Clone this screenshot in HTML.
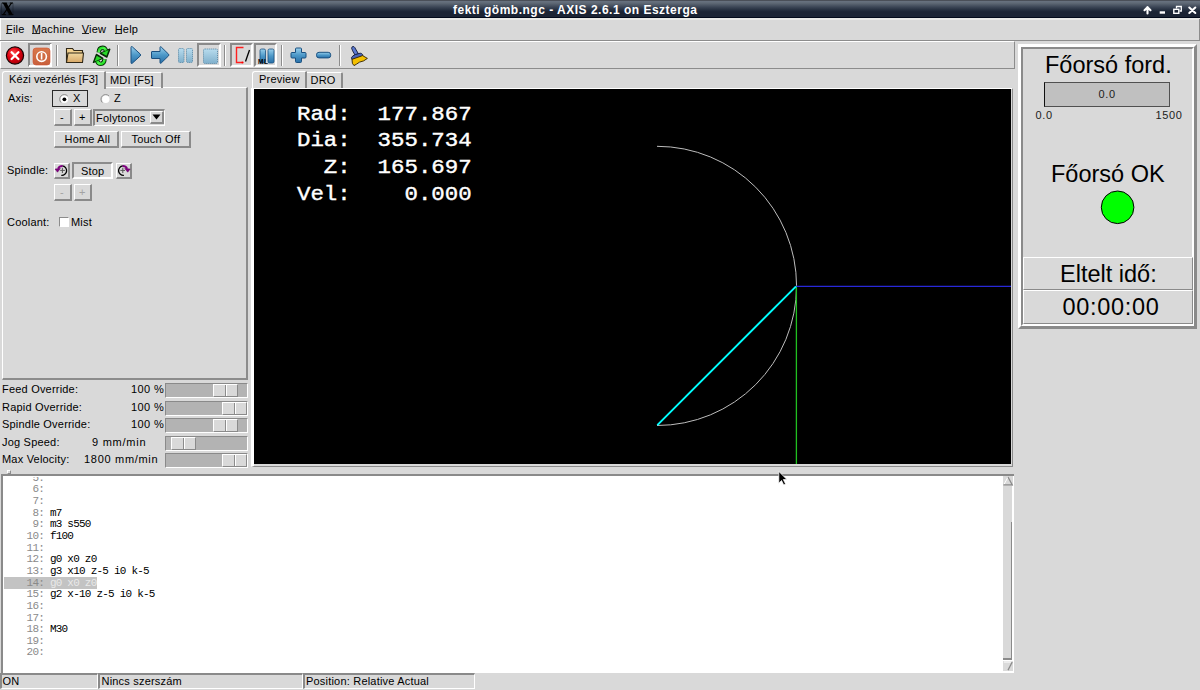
<!DOCTYPE html>
<html><head><meta charset="utf-8">
<style>
*{margin:0;padding:0;box-sizing:border-box}
html,body{width:1200px;height:690px;overflow:hidden;background:#d9d9d9;font-family:"Liberation Sans",sans-serif;font-size:11px;color:#000;position:relative;letter-spacing:0.2px}
.mono{letter-spacing:0}
.a{position:absolute}
.t{position:absolute;line-height:1;white-space:pre}
.u{text-decoration:underline;text-underline-offset:0px}
.rz{position:absolute;border-style:solid;border-width:1px 2px 2px 1px;border-color:#fff #8a8a8a #8a8a8a #fff;background:#d9d9d9}
.sk{position:absolute;border-style:solid;border-width:2px 1px 1px 2px;border-color:#8a8a8a #fff #fff #8a8a8a}
.sep{position:absolute;top:45px;width:2px;height:21px;border-left:1px solid #8c8c8c;border-right:1px solid #fff}
.mono{font-family:"Liberation Mono",monospace}
svg{position:absolute;overflow:visible}
</style></head><body>
<!-- title bar -->
<div class="a" style="left:0;top:0;width:1200px;height:18px;background:linear-gradient(#4a4f58 0px,#4a4f58 1px,#687280 1px,#606a76 3px,#3c4656 7px,#1e2838 11px,#1b2434 12px,#1b2434 17px,#020a1a 17px,#020a1a 18px)"></div>
<svg style="left:0;top:0" width="16" height="18" viewBox="0 0 16 18">
 <path d="M1.5 3 H13 V15 H1.5 Z" fill="none" stroke="#0a1018" stroke-width="0.8" opacity="0.45"/>
 <path d="M2.8 3 L6.6 3 L12.8 14.6 L9 14.6 Z" fill="#000"/>
 <path d="M12.2 3 L10.8 3 L2.6 14.6 L4 14.6 Z" fill="#000"/>
 <path d="M1.8 14.6 H6 M8.5 14.6 H13.4 M2 3 H6.8 M9.8 3 H13" stroke="#000" stroke-width="0.9"/>
</svg>
<div class="t" style="left:453px;top:3.6px;font-size:12px;letter-spacing:0.5px;font-weight:bold;color:#fff">fekti gömb.ngc - AXIS 2.6.1 on Eszterga</div>
<svg style="left:1140px;top:0" width="60" height="18" viewBox="1140 0 60 18">
 <path d="M1147.5 7.2 L1144.5 10.2 M1147.5 7.2 L1150.5 10.2 M1147.5 7 V13.5" stroke="#fff" stroke-width="2.1" fill="none" stroke-linecap="round"/>
 <rect x="1159.7" y="11.3" width="5.3" height="2.4" fill="#fff"/>
 <rect x="1173.8" y="9.3" width="5" height="4" stroke="#fff" stroke-width="1.4" fill="none"/>
 <path d="M1176.5 8.5 V6.5 H1181.3 V11 H1179.5" stroke="#fff" stroke-width="1.3" fill="none"/>
 <path d="M1189.3 7.5 L1195.3 13 M1195.3 7.5 L1189.3 13" stroke="#fff" stroke-width="2.1" fill="none" stroke-linecap="round"/>
</svg>
<!-- menubar -->
<div class="a" style="left:0;top:18px;width:1200px;height:2px;background:#e8e9e6"></div>
<div class="a" style="left:0;top:18px;width:1px;height:24px;background:#fff"></div>
<div class="a" style="left:0;top:40px;width:1200px;height:1px;background:#8c8c8c"></div>
<div class="a" style="left:1199px;top:19px;width:1px;height:22px;background:#8c8c8c"></div>
<div class="t" style="left:6px;top:23.5px">File</div>
<div class="t" style="left:31.7px;top:23.5px">Machine</div>
<div class="t" style="left:81.7px;top:23.5px">View</div>
<div class="t" style="left:114.7px;top:23.5px">Help</div>
<div class="a" style="left:6px;top:33px;width:6px;height:1px;background:#222"></div>
<div class="a" style="left:32px;top:33px;width:8px;height:1px;background:#222"></div>
<div class="a" style="left:82px;top:33px;width:7px;height:1px;background:#222"></div>
<div class="a" style="left:115px;top:33px;width:7px;height:1px;background:#222"></div>
<!-- toolbar -->
<div class="a" style="left:0;top:41px;width:1015px;height:28px;border-style:solid;border-width:1px;border-color:#fff #8c8c8c #8c8c8c #fff"></div>
<div class="sk" style="left:28px;top:43px;width:24px;height:24px;border-width:2px"></div>
<div class="sk" style="left:197px;top:43px;width:24px;height:24px;border-width:2px"></div>
<div class="sk" style="left:230px;top:43px;width:23px;height:24px;border-width:2px"></div>
<div class="sk" style="left:254px;top:43px;width:23px;height:24px;border-width:2px"></div>
<svg style="left:0;top:40px" width="380" height="30" viewBox="0 40 380 30">
 <defs>
  <radialGradient id="gred" cx="0.4" cy="0.35" r="0.7"><stop offset="0" stop-color="#ff5050"/><stop offset="0.5" stop-color="#e00010"/><stop offset="1" stop-color="#a00008"/></radialGradient>
  <linearGradient id="gorg" x1="0" y1="0" x2="0" y2="1"><stop offset="0" stop-color="#d8784c"/><stop offset="1" stop-color="#c8603c"/></linearGradient>
  <linearGradient id="gfold" x1="0" y1="0" x2="0" y2="1"><stop offset="0" stop-color="#f0d8a0"/><stop offset="1" stop-color="#d8a868"/></linearGradient>
  <linearGradient id="gblue" x1="0" y1="0" x2="0" y2="1"><stop offset="0" stop-color="#9ad0ec"/><stop offset="0.5" stop-color="#4c98c8"/><stop offset="1" stop-color="#2a70a8"/></linearGradient>
  <linearGradient id="glb" x1="0" y1="0" x2="0" y2="1"><stop offset="0" stop-color="#b8dcee"/><stop offset="1" stop-color="#80b0cc"/></linearGradient>
  <linearGradient id="ggrn" x1="0" y1="0" x2="1" y2="1"><stop offset="0" stop-color="#10d010"/><stop offset="0.45" stop-color="#50f850"/><stop offset="1" stop-color="#00c800"/></linearGradient>
 </defs>
 <!-- estop -->
 <circle cx="15" cy="55.5" r="8.6" fill="url(#gred)" stroke="#180000" stroke-width="1.2"/>
 <path d="M11.6 52.2 L18.4 59 M18.4 52.2 L11.6 59" stroke="#fff" stroke-width="2.3" stroke-linecap="round"/>
 <!-- power sunken frame -->
 <path d="M29 66 H51 V44" stroke="#fff" stroke-width="2" fill="none" transform="translate(0,0)"/>
 <rect x="33" y="48" width="17" height="17" rx="3" fill="url(#gorg)" stroke="#d05030" stroke-width="0.6"/>
 <circle cx="41.6" cy="56.6" r="4.8" fill="none" stroke="#fff" stroke-width="1.6"/>
 <path d="M41.6 53 V59.5" stroke="#fff" stroke-width="1.6"/>
 <!-- folder -->
 <path d="M66.5 62.5 V48.5 H72.5 L74 50.5 H82.5 V53" fill="#f0d090" stroke="#302818" stroke-width="1.1"/>
 <path d="M66.5 62.5 L68 53 H83.5 L82.5 62.5 Z" fill="url(#gfold)" stroke="#302818" stroke-width="1.1"/>
 <!-- refresh -->
 <g id="rfa">
  <path d="M98.7 52.4 Q98.9 47.9 102.6 47.7 Q105 47.7 106 50.6" stroke="#062806" stroke-width="4.4" fill="none"/>
  <path d="M100.3 53.4 L109.8 49.2 L106.8 57.2 Z" fill="#062806" stroke="#062806" stroke-width="1.3" stroke-linejoin="round"/>
  <path d="M98.7 52.4 Q98.9 47.9 102.6 47.7 Q105 47.7 106 50.6" stroke="url(#ggrn)" stroke-width="2.6" fill="none"/>
  <path d="M101.6 53.1 L108.6 50 L106.5 55.8 Z" fill="#28d828"/>
 </g>
 <use href="#rfa" transform="rotate(180 101.6 55.8)"/>
 <!-- play -->
 <path d="M131 47.5 Q131 46 132.3 46.8 L140.2 54 Q141 55 140.2 56 L132.3 63.2 Q131 64 131 62.5 Z" fill="url(#gblue)" stroke="#1a5080" stroke-width="1"/>
 <!-- arrow -->
 <path d="M152 51.5 H160 V47.5 Q160 46.2 161.2 47 L168.6 54.2 Q169.3 55 168.6 55.8 L161.2 63 Q160 63.8 160 62.5 V58.5 H152 Q151.5 58.5 151.5 58 V52 Q151.5 51.5 152 51.5 Z" fill="url(#gblue)" stroke="#1a5080" stroke-width="1"/>
 <!-- pause -->
 <rect x="178.5" y="48.5" width="5.5" height="14" rx="1" fill="url(#glb)" stroke="#5a8aa8" stroke-width="0.9" stroke-dasharray="1.2 0.8"/>
 <rect x="186.5" y="48.5" width="6" height="14" rx="1" fill="url(#glb)" stroke="#5a8aa8" stroke-width="0.9" stroke-dasharray="1.2 0.8"/>
 <!-- stop frame -->
 <rect x="203.5" y="49" width="14" height="14.5" rx="1.2" fill="url(#glb)" stroke="#5a8aa8" stroke-width="0.9" stroke-dasharray="1.2 0.8"/>
 <!-- frame 2 -->
 <path d="M243.5 47.5 H236.5 V62.5 H242.5" stroke="#ff2020" stroke-width="1.4" fill="none"/>
 <circle cx="242.5" cy="62.5" r="1.1" fill="#ff0000"/>
 <path d="M249.5 50 L245.5 61.5" stroke="#000" stroke-width="1.3"/>
 <!-- frame 3 -->
 <rect x="260" y="49" width="5.5" height="14" rx="1.5" fill="url(#gblue)" stroke="#1a5080" stroke-width="0.8"/>
 <rect x="268" y="49" width="6" height="14" rx="1.5" fill="url(#gblue)" stroke="#1a5080" stroke-width="0.8"/>
 <text x="258" y="63.5" font-family="Liberation Sans" font-weight="bold" font-size="6.5" fill="#000" letter-spacing="0.6">ML</text>
 <!-- plus -->
 <path d="M296.5 48 H300.5 Q301.5 48 301.5 49 V52.5 H305 Q306 52.5 306 53.5 V57 Q306 58 305 58 H301.5 V61.5 Q301.5 62.5 300.5 62.5 H296.5 Q295.5 62.5 295.5 61.5 V58 H292 Q291 58 291 57 V53.5 Q291 52.5 292 52.5 H295.5 V49 Q295.5 48 296.5 48 Z" fill="url(#gblue)" stroke="#1a5080" stroke-width="1"/>
 <!-- minus -->
 <rect x="316.5" y="52.3" width="14.2" height="5.6" rx="2.5" fill="url(#gblue)" stroke="#1a5080" stroke-width="1"/>
 <!-- brush -->
 <path d="M351.6 48.2 Q351.8 45.9 353.9 46.6 Q354.8 47.2 355.6 49 L358.3 53.6 L355.3 55.6 L352.6 50.8 Z" fill="#5a78d0" stroke="#101838" stroke-width="0.9"/>
 <path d="M351.4 57.8 Q352.5 55.5 355.2 54.6 L360.2 53.2 Q362 53.3 362.6 54.6 L362.8 56.2 L352.2 59.8 Z" fill="#4a64b8" stroke="#101838" stroke-width="0.9"/>
 <path d="M352 59.3 L362.6 55.6 L367.4 58.4 L363.6 60.9 L359.6 62.1 L356.6 64.1 L354 65.6 L352.4 63.4 Z" fill="#f4c000" stroke="#302000" stroke-width="0.9" stroke-linejoin="round"/>
</svg>
<div class="sep" style="left:56px"></div>
<div class="sep" style="left:117px"></div>
<div class="sep" style="left:224px"></div>
<div class="sep" style="left:281px"></div>
<div class="sep" style="left:339px"></div>
<!-- left notebook -->
<div class="a" style="left:2px;top:87px;width:246px;height:293px;border-style:solid;border-width:1px 2px 2px 1px;border-color:#fff #8c8c8c #8c8c8c #fff"></div>
<div class="a" style="left:105px;top:72px;width:58px;height:16px;border-style:solid;border-width:1px 2px 0 1px;border-color:#fff #8c8c8c #8c8c8c #fff;border-top-right-radius:2px"></div>
<div class="a" style="left:2px;top:71px;width:104px;height:18px;background:#d9d9d9;border-style:solid;border-width:1px 2px 0 1px;border-color:#fff #8c8c8c #8c8c8c #fff;border-top-left-radius:3px;border-top-right-radius:1px"></div>
<div class="a" style="left:3px;top:87px;width:101px;height:2px;background:#d9d9d9"></div>
<div class="t" style="left:9px;top:74px;letter-spacing:0.1px">Kézi vezérlés [F3]</div>
<div class="t" style="left:110px;top:75.2px">MDI [F5]</div>
<!-- axis -->
<div class="t" style="left:8px;top:93.1px">Axis:</div>
<div class="a" style="left:52px;top:90px;width:36px;height:17px;border:1px solid #2a2a2a"></div>
<div class="a" style="left:53px;top:91px;width:34px;height:15px;border-style:solid;border-width:1px;border-color:#fff #8c8c8c #8c8c8c #fff;opacity:.0"></div>
<svg style="left:0.8px;top:0.7px" width="130" height="110">
 <path d="M66.7 95 A4.3 4.3 0 0 0 60 101.5" stroke="#8c8c8c" stroke-width="1" fill="none"/>
 <circle cx="63.4" cy="98.3" r="3.7" fill="#fff"/>
 <circle cx="63.4" cy="98.3" r="1.9" fill="#000"/>
 <path d="M108 95 A4.3 4.3 0 0 0 101.3 101.5" stroke="#8c8c8c" stroke-width="1" fill="none"/>
 <circle cx="104.8" cy="98.3" r="3.7" fill="#fff"/>
</svg>
<div class="t" style="left:73px;top:93px">X</div>
<div class="t" style="left:114px;top:93px">Z</div>
<!-- jog buttons -->
<div class="rz" style="left:54px;top:109px;width:18px;height:17px"></div>
<div class="t" style="left:60px;top:112px">-</div>
<div class="rz" style="left:74px;top:109px;width:18px;height:17px"></div>
<div class="t" style="left:79px;top:112px">+</div>
<div class="sk" style="left:93px;top:109px;width:72px;height:17px;border-width:2px 1px 1px 2px"></div>
<div class="t" style="left:96px;top:112.5px">Folytonos</div>
<div class="rz" style="left:150px;top:111px;width:14px;height:13px"></div>
<svg style="left:0;top:0" width="170" height="130"><path d="M152.5 114.5 H160.5 L156.5 119.5 Z" fill="#000"/></svg>
<div class="rz" style="left:54px;top:131px;width:65px;height:17px"></div>
<div class="t" style="left:64.5px;top:133.5px">Home All</div>
<div class="rz" style="left:121px;top:131px;width:70px;height:17px"></div>
<div class="t" style="left:131.5px;top:133.5px">Touch Off</div>
<!-- spindle -->
<div class="t" style="left:7px;top:164.6px">Spindle:</div>
<div class="rz" style="left:54px;top:163px;width:16px;height:16px"></div>
<div class="sk" style="left:72px;top:162px;width:41px;height:17px;border-width:2px;border-color:#8c8c8c #fff #fff #8c8c8c"></div>
<div class="t" style="left:81px;top:165.7px">Stop</div>
<div class="rz" style="left:116px;top:163px;width:16px;height:16px"></div>
<svg style="left:0;top:0" width="140" height="185">
 <g id="ccw">
 <path d="M62.3 165.8 A4.4 4.4 0 1 1 61.3 175.4" stroke="#000" stroke-width="1.3" fill="none"/>
 <path d="M62.4 167.8 V173 M60.2 170.4 H64.9" stroke="#555" stroke-width="1"/>
 <path d="M62.6 166 Q59.5 165.8 58 168.6" stroke="#800080" stroke-width="1.9" fill="none"/>
 <path d="M55 169 L60.4 168.4 L57.5 172.2 Z" fill="#800080" stroke="#600060" stroke-width="0.5"/>
 </g>
 <use href="#ccw" transform="translate(185.2 0) scale(-1 1)"/>
</svg>
<div class="rz" style="left:54px;top:184px;width:18px;height:17px"></div>
<div class="t" style="left:60px;top:187px;color:#a3a3a3">-</div>
<div class="rz" style="left:74px;top:184px;width:18px;height:17px"></div>
<div class="t" style="left:79px;top:187px;color:#a3a3a3">+</div>
<!-- coolant -->
<div class="t" style="left:7px;top:216.6px">Coolant:</div>
<div class="a" style="left:59px;top:217px;width:10px;height:10px;background:#fff;border-style:solid;border-width:1px;border-color:#8c8c8c #fff #fff #8c8c8c"></div>
<div class="t" style="left:71px;top:216.6px">Mist</div>
<!-- preview notebook -->
<style>.dro{left:297px;font-size:22.4px;font-weight:normal;-webkit-text-stroke:0.45px #fff;color:#fff;transform:scaleY(0.87);transform-origin:0 17.17px}</style>
<div class="a" style="left:306px;top:72px;width:37px;height:17px;border-style:solid;border-width:1px 2px 0 1px;border-color:#fff #8c8c8c #8c8c8c #fff;border-top-right-radius:2px"></div>
<div class="a" style="left:252px;top:71px;width:55px;height:18px;background:#d9d9d9;border-style:solid;border-width:1px 2px 0 1px;border-color:#fff #8c8c8c #8c8c8c #fff;border-top-left-radius:3px;border-top-right-radius:1px"></div>
<div class="t" style="left:259px;top:73.5px">Preview</div>
<div class="t" style="left:310.5px;top:75px">DRO</div>
<div class="a" style="left:251px;top:88px;width:762px;height:379px;border-style:solid;border-width:1px 1px 1px 3px;border-color:#fff #8c8c8c #8c8c8c #fff"></div>
<div class="a" style="left:254px;top:89px;width:757px;height:375px;background:#000"></div>
<div class="t mono dro" style="top:102.63px">Rad:  177.867</div>
<div class="t mono dro" style="top:129.33px">Dia:  355.734</div>
<div class="t mono dro" style="top:156.03px">  Z:  165.697</div>
<div class="t mono dro" style="top:182.73px">Vel:    0.000</div>

<svg style="left:254px;top:89px" width="757" height="375" viewBox="254 89 757 375">
 <path d="M657 146.3 A100 100 0 0 1 657 425.5" stroke="#bdbdbd" stroke-width="1" fill="none"/>
 <path d="M796 286.4 H1011" stroke="#2828d8" stroke-width="1.3"/>
 <path d="M796.4 287 V464" stroke="#20c020" stroke-width="1.3"/>
 <path d="M657.3 425.2 L796 286.4" stroke="#00ffff" stroke-width="1.9"/>
</svg>
<!-- overrides -->
<div class="t" style="left:2px;top:384px">Feed Override:</div>
<div class="t" style="left:2px;top:401.5px">Rapid Override:</div>
<div class="t" style="left:2px;top:419px">Spindle Override:</div>
<div class="t" style="left:2px;top:436.5px">Jog Speed:</div>
<div class="t" style="left:2px;top:454px">Max Velocity:</div>
<div class="t" style="left:131px;top:384px;letter-spacing:0.4px">100 %</div>
<div class="t" style="left:131px;top:401.5px;letter-spacing:0.4px">100 %</div>
<div class="t" style="left:131px;top:419px;letter-spacing:0.4px">100 %</div>
<div class="t" style="left:92px;top:436.5px;letter-spacing:0.75px">9 mm/min</div>
<div class="t" style="left:84px;top:454px;letter-spacing:0.7px">1800 mm/min</div>
<div class="sk" style="left:165px;top:383px;width:83px;height:15px;background:#b3b3b3;border-width:1px"></div>
<div class="rz" style="left:213px;top:384px;width:25px;height:13px;border-width:1px"></div><div class="a" style="left:225px;top:385px;width:2px;height:11px;border-left:1px solid #8c8c8c;border-right:1px solid #fff"></div>
<div class="sk" style="left:165px;top:400.5px;width:83px;height:15px;background:#b3b3b3;border-width:1px"></div>
<div class="rz" style="left:222px;top:401.5px;width:25px;height:13px;border-width:1px"></div><div class="a" style="left:234px;top:402.5px;width:2px;height:11px;border-left:1px solid #8c8c8c;border-right:1px solid #fff"></div>
<div class="sk" style="left:165px;top:418px;width:83px;height:15px;background:#b3b3b3;border-width:1px"></div>
<div class="rz" style="left:213px;top:419px;width:25px;height:13px;border-width:1px"></div><div class="a" style="left:225px;top:420px;width:2px;height:11px;border-left:1px solid #8c8c8c;border-right:1px solid #fff"></div>
<div class="sk" style="left:165px;top:435.5px;width:83px;height:15px;background:#b3b3b3;border-width:1px"></div>
<div class="rz" style="left:171px;top:436.5px;width:25px;height:13px;border-width:1px"></div><div class="a" style="left:183px;top:437.5px;width:2px;height:11px;border-left:1px solid #8c8c8c;border-right:1px solid #fff"></div>
<div class="sk" style="left:165px;top:453px;width:83px;height:15px;background:#b3b3b3;border-width:1px"></div>
<div class="rz" style="left:222px;top:454px;width:25px;height:13px;border-width:1px"></div><div class="a" style="left:234px;top:455px;width:2px;height:11px;border-left:1px solid #8c8c8c;border-right:1px solid #fff"></div>
<!-- sash handle -->
<div class="a" style="left:7px;top:470px;width:4px;height:4px;border-style:solid;border-width:1px;border-color:#fff #8c8c8c #8c8c8c #fff"></div>
<!-- gcode text -->
<div class="a" style="left:1px;top:474px;width:1013px;height:199px;background:#fff;border-style:solid;border-width:2px 0 0 2px;border-color:#8a8a8a"></div>
<div class="a" style="left:4px;top:577px;width:92.5px;height:11.5px;background:#c3c3c3"></div>
<div class="t mono" style="left:20.8px;top:472.85px;font-size:11px;letter-spacing:-0.78px;line-height:11.64px"><span style="color:#8a8a8a">  5: </span><span style="color:#000"></span>
<span style="color:#8a8a8a">  6: </span><span style="color:#000"></span>
<span style="color:#8a8a8a">  7: </span><span style="color:#000"></span>
<span style="color:#8a8a8a">  8: </span><span style="color:#000">m7</span>
<span style="color:#8a8a8a">  9: </span><span style="color:#000">m3 s550</span>
<span style="color:#8a8a8a"> 10: </span><span style="color:#000">f100</span>
<span style="color:#8a8a8a"> 11: </span><span style="color:#000"></span>
<span style="color:#8a8a8a"> 12: </span><span style="color:#000">g0 x0 z0</span>
<span style="color:#8a8a8a"> 13: </span><span style="color:#000">g3 x10 z-5 i0 k-5</span>
<span style="color:#8a8a8a"> 14: </span><span style="color:#e9e9e9">g0 x0 z0</span>
<span style="color:#8a8a8a"> 15: </span><span style="color:#000">g2 x-10 z-5 i0 k-5</span>
<span style="color:#8a8a8a"> 16: </span><span style="color:#000"></span>
<span style="color:#8a8a8a"> 17: </span><span style="color:#000"></span>
<span style="color:#8a8a8a"> 18: </span><span style="color:#000">M30</span>
<span style="color:#8a8a8a"> 19: </span><span style="color:#000"></span>
<span style="color:#8a8a8a"> 20: </span><span style="color:#000"></span></div>
<div class="a" style="left:3px;top:476px;width:1000px;height:1px;background:#fff"></div>
<div class="a" style="left:1px;top:474px;width:1013px;height:2px;background:#8a8a8a"></div>
<!-- scrollbar -->
<div class="a" style="left:1003px;top:476px;width:10px;height:10px;background:#d9d9d9"></div>
<div class="a" style="left:1003px;top:486px;width:10px;height:36px;background:#d9d9d9;border-right:1px solid #fff"></div>
<div class="a" style="left:1003px;top:522px;width:9px;height:138px;background:#d9d9d9;border-style:solid;border-width:0 1px 2px 0;border-color:#8a8a8a"></div>
<div class="a" style="left:1003px;top:661px;width:10px;height:10px;background:#dadada"></div>
<svg style="left:1000px;top:470px" width="20" height="210" viewBox="1000 470 20 210">
 <path d="M1003.8 484.8 L1008 477 L1012.2 484.8 Z" fill="#d9d9d9"/>
 <path d="M1003.8 484.8 L1008 477" stroke="#fff" stroke-width="1"/>
 <path d="M1008 477 L1012.2 484.8 H1003.3" stroke="#8a8a8a" stroke-width="1.3" fill="none"/>
 <path d="M1003.8 662 H1012.2 L1008 670.3" stroke="#fff" stroke-width="1" fill="none"/>
 <path d="M1012.2 662 L1008 670.3" stroke="#8a8a8a" stroke-width="1.4" fill="none"/>
</svg>
<!-- statusbar -->
<div class="a" style="left:0;top:673px;width:98px;height:16px;border-style:solid;border-width:2px 1px 1px 2px;border-color:#8a8a8a #fff #fff #8a8a8a"></div>
<div class="t" style="left:2.5px;top:676.3px">ON</div>
<div class="a" style="left:98px;top:673px;width:205px;height:16px;border-style:solid;border-width:2px 1px 1px 2px;border-color:#8a8a8a #fff #fff #8a8a8a"></div>
<div class="t" style="left:101.5px;top:676.3px">Nincs szerszám</div>
<div class="a" style="left:303px;top:673px;width:172px;height:16px;border-style:solid;border-width:2px 1px 1px 2px;border-color:#8a8a8a #fff #fff #8a8a8a"></div>
<div class="t" style="left:306px;top:676.3px">Position: Relative Actual</div>
<!-- cursor -->
<svg style="left:777px;top:469.5px" width="14" height="20" viewBox="0 0 15.5 22">
 <path d="M2 1.5 L2 14.5 L5 11.5 L7.5 16.5 L9.5 15.5 L7 10.5 L11 10.5 Z" fill="#000" stroke="#fff" stroke-width="0.8"/>
</svg>
<!-- right pyvcp panel -->
<div class="a" style="left:1018px;top:44px;width:179px;height:285px;border-style:solid;border-width:3px 3px 3px 3px;border-color:#fff #8a8a8a #8a8a8a #fff"></div>
<div class="a" style="left:1021px;top:47px;width:173px;height:279px;border-style:solid;border-width:2px;border-color:#8a8a8a #fff #fff #8a8a8a"></div>
<div class="t" style="left:1045px;top:54.3px;font-size:23.5px;letter-spacing:0">Főorsó ford.</div>
<div class="a" style="left:1044px;top:82px;width:126px;height:25px;background:#c0c0c0;border-style:solid;border-width:1px;border-color:#505050 #505050 #505050 #101010"></div>
<div class="t" style="left:1098.5px;top:88.5px;font-size:11px;letter-spacing:0.65px;color:#1c1c1c">0.0</div>
<div class="t" style="left:1035.5px;top:109.5px;font-size:11px;letter-spacing:0.65px;color:#1c1c1c">0.0</div>
<div class="t" style="left:1155.5px;top:109.5px;font-size:11px;letter-spacing:0.65px;color:#1c1c1c">1500</div>
<div class="t" style="left:1051px;top:162.8px;font-size:23.5px;letter-spacing:0">Főorsó OK</div>
<svg style="left:1095px;top:185px" width="45" height="45" viewBox="1095 185 45 45"><circle cx="1117.6" cy="207.3" r="16.3" fill="#00ff00" stroke="#000" stroke-width="1"/></svg>
<div class="a" style="left:1023px;top:257px;width:170px;height:33px;border-style:solid;border-width:1px;border-color:#fff #8a8a8a #8a8a8a #fff"></div>
<div class="t" style="left:1060px;top:262.8px;font-size:23.5px;letter-spacing:0">Eltelt idő:</div>
<div class="a" style="left:1023px;top:290px;width:170px;height:34px;border-style:solid;border-width:1px;border-color:#fff #8a8a8a #8a8a8a #fff"></div>
<div class="t" style="left:1062.5px;top:296.1px;font-size:23.5px;letter-spacing:0.7px">00:00:00</div>
</body></html>
